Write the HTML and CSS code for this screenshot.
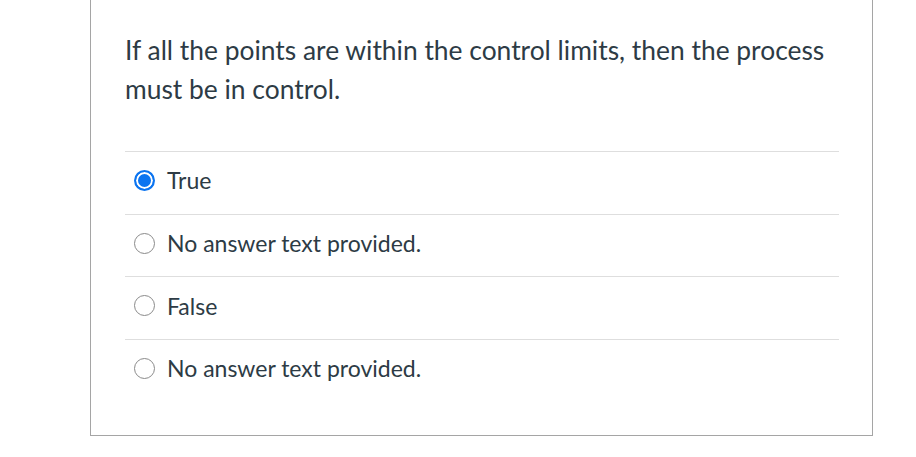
FILE: index.html
```
<!DOCTYPE html>
<html>
<head>
<meta charset="utf-8">
<link rel="stylesheet" href="styles.css">
</head>
<body>
<div class="question">
  <div class="question-text">If all the points are within the control limits, then the process must be in control.</div>
  <div class="answers">
    <label class="answer">
      <span class="radio checked"></span>
      <span class="answer-text">True</span>
    </label>
    <label class="answer">
      <span class="radio"></span>
      <span class="answer-text">No answer text provided.</span>
    </label>
    <label class="answer">
      <span class="radio"></span>
      <span class="answer-text">False</span>
    </label>
    <label class="answer">
      <span class="radio"></span>
      <span class="answer-text">No answer text provided.</span>
    </label>
  </div>
</div>
</body>
</html>
```
FILE: styles.css
```
html, body {
  margin: 0;
  padding: 0;
  background: #ffffff;
}
body {
  font-family: Lato, "Open Sans", sans-serif;
  color: #2d3b45;
}
.question {
  margin-left: 90px;
  width: 783px;
  border: 1px solid #a5a5a5;
  border-top: 0;
  padding: 31px 33px 33px 34px;
  box-sizing: border-box;
}
.question-text {
  font-size: 26.4px;
  line-height: 39px;
  margin-bottom: 42px;
}
.answers {
  display: flex;
  flex-direction: column;
}
.answer {
  display: flex;
  align-items: center;
  height: 62.7px;
  border-top: 1px solid #dedede;
  box-sizing: border-box;
  padding-left: 9px;
  padding-bottom: 5px;
  gap: 12px;
}
.radio {
  width: 21px;
  height: 21px;
  box-sizing: border-box;
  border-radius: 50%;
  border: 1px solid #8a8a8a;
  background: #fff;
  flex: none;
}
.radio.checked {
  border: 2px solid #0b74f0;
  box-shadow: inset 0 0 0 2px #fff;
  background: #0b74f0;
}
.answer-text {
  font-size: 23px;
  line-height: 26px;
}
```
